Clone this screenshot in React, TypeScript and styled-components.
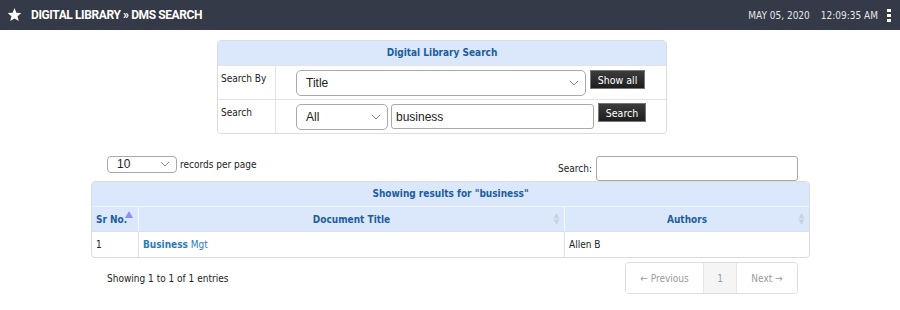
import React from "react";
import styled, { createGlobalStyle } from "styled-components";

const GlobalStyle = createGlobalStyle`
  body {
    margin: 0;
    background: #ffffff;
    font-family: "DejaVu Sans Condensed", "Liberation Sans", sans-serif;
    font-size: 10px;
    color: #222;
  }
`;

const TopBar = styled.div`
  height: 30px;
  background: #343a47;
  display: flex;
  align-items: center;
  padding: 0 7px;
  color: #fff;
`;

const Crumb = styled.div`
  margin-left: 9px;
  font-family: "Roboto", "Liberation Sans", sans-serif;
  font-weight: 700;
  font-size: 12px;
  letter-spacing: -0.4px;
  flex: 1;
`;

const Clock = styled.div`
  font-size: 10px;
  color: #e4e6ea;
  span {
    margin-left: 11px;
  }
`;

const Kebab = styled.div`
  display: flex;
  flex-direction: column;
  gap: 2px;
  margin-left: 9px;
  margin-right: 2px;
  i {
    width: 4px;
    height: 3px;
    background: #fff;
  }
`;

const Page = styled.div`
  padding: 10px 90px 0 91px;
`;

const Panel = styled.div`
  width: 448px;
  margin-left: 126px;
  border: 1px solid #d9dde3;
  border-radius: 4px;
  overflow: hidden;
`;

const BlueHead = styled.div`
  background: #dbe8fb;
  height: 24px;
  line-height: 24px;
  text-align: center;
  color: #1d5d9f;
  font-weight: 700;
`;

const FormRow = styled.div`
  display: grid;
  grid-template-columns: 58px 1fr;
  border-top: 1px solid #e3e3e3;
  height: 33px;
`;

const Label = styled.div`
  border-right: 1px solid #e3e3e3;
  padding: 7px 0 0 3px;
`;

const Controls = styled.div`
  display: flex;
  align-items: flex-start;
  padding: 4px 0 0 20px;
  gap: 3px;
`;

const SelectBox = styled.div<{ $w: number; $h: number; $r: number }>`
  width: ${(p) => p.$w}px;
  height: ${(p) => p.$h}px;
  box-sizing: border-box;
  border: 1px solid #a9a9a9;
  border-radius: ${(p) => p.$r}px;
  display: flex;
  align-items: center;
  justify-content: space-between;
  padding: 0 6px 0 9px;
  font-family: "Liberation Sans", sans-serif;
  font-size: 12px;
  color: #222;
  background: #fff;
`;

const Chevron = () => (
  <svg width="10" height="6" viewBox="0 0 10 6">
    <path d="M1 1l4 4 4-4" fill="none" stroke="#888" strokeWidth="1" />
  </svg>
);

const TextBox = styled.div<{ $w: number }>`
  width: ${(p) => p.$w}px;
  height: 25px;
  box-sizing: border-box;
  border: 1px solid #a9a9a9;
  border-radius: 3px;
  display: flex;
  align-items: center;
  padding-left: 4px;
  font-family: "Liberation Sans", sans-serif;
  font-size: 12px;
  background: #fff;
`;

const DarkButton = styled.div<{ $w: number; $top: number }>`
  width: ${(p) => p.$w}px;
  height: 19px;
  margin-top: ${(p) => p.$top}px;
  margin-left: 1px;
  box-sizing: border-box;
  background: linear-gradient(#3c3c3c, #1e1e1e);
  border: 1px solid #777;
  color: #fff;
  font-size: 10.5px;
  display: flex;
  align-items: center;
  justify-content: center;
`;

const ListBar = styled.div`
  display: flex;
  align-items: center;
  justify-content: space-between;
  margin-top: 21px;
  padding: 0 12px 0 16px;
  height: 26px;
`;

const Records = styled.div`
  display: flex;
  align-items: center;
  gap: 3px;
  margin-top: -8px;
`;

const FilterBox = styled.div`
  display: flex;
  align-items: center;
  gap: 4px;
`;

const Grid = styled.div`
  border: 1px solid #d9dde3;
  border-radius: 4px;
  overflow: hidden;
`;

const HeadRow = styled.div`
  display: grid;
  grid-template-columns: 46px 426px 1fr;
  background: #dbe8fb;
  border-top: 1px solid #f0f5fd;
  height: 24px;
`;

const HeadCell = styled.div<{ $center?: boolean }>`
  position: relative;
  display: flex;
  align-items: center;
  justify-content: ${(p) => (p.$center ? "center" : "flex-start")};
  padding-left: ${(p) => (p.$center ? 0 : 4)}px;
  color: #1d5d9f;
  font-weight: 700;
  & + & {
    border-left: 1px solid #f3f7fe;
  }
`;

const SortIcon = styled.svg`
  position: absolute;
  right: 4px;
  top: 5px;
`;

const BodyRow = styled.div`
  display: grid;
  grid-template-columns: 46px 426px 1fr;
  border-top: 1px solid #dde2e8;
  height: 25px;
`;

const Cell = styled.div`
  display: flex;
  align-items: center;
  padding-left: 4px;
  & + & {
    border-left: 1px solid #dde2e8;
  }
`;

const DocLink = styled.a`
  color: #2b7bb9;
  text-decoration: none;
  b {
    font-weight: 700;
  }
`;

const Footer = styled.div`
  display: flex;
  justify-content: space-between;
  align-items: center;
  margin-top: 4px;
  padding: 0 12px 0 16px;
`;

const Pager = styled.div`
  display: flex;
  border: 1px solid #dedede;
  border-radius: 4px;
  overflow: hidden;
  height: 30px;
`;

const PageItem = styled.div<{ $active?: boolean; $w: number }>`
  width: ${(p) => p.$w}px;
  display: flex;
  align-items: center;
  justify-content: center;
  color: #9a9a9a;
  background: ${(p) => (p.$active ? "#f5f5f5" : "#fff")};
  & + & {
    border-left: 1px solid #e6e6e6;
  }
`;

const Star = () => (
  <svg width="15" height="14" viewBox="0 0 24 23">
    <path
      d="M12 0l3.1 7.6 8.2.6-6.3 5.3 2 8L12 17.2 5 21.5l2-8L.7 8.2l8.2-.6z"
      fill="#fff"
    />
  </svg>
);

const Both = () => (
  <SortIcon width="7" height="14" viewBox="0 0 7 14">
    <path d="M3.5 1L6.5 6.5H.5z" fill="#c9d3df" />
    <path d="M3.5 13L.5 7.5h6z" fill="#c9d3df" />
  </SortIcon>
);

export default function App() {
  return (
    <>
      <GlobalStyle />
      <TopBar>
        <Star />
        <Crumb>DIGITAL LIBRARY » DMS SEARCH</Crumb>
        <Clock>
          MAY 05, 2020<span>12:09:35 AM</span>
        </Clock>
        <Kebab>
          <i />
          <i />
          <i />
        </Kebab>
      </TopBar>
      <Page>
        <Panel>
          <BlueHead>Digital Library Search</BlueHead>
          <FormRow>
            <Label>Search By</Label>
            <Controls>
              <SelectBox $w={290} $h={26} $r={5}>
                Title
                <Chevron />
              </SelectBox>
              <DarkButton $w={55} $top={0}>
                Show all
              </DarkButton>
            </Controls>
          </FormRow>
          <FormRow>
            <Label>Search</Label>
            <Controls>
              <SelectBox $w={92} $h={26} $r={5}>
                All
                <Chevron />
              </SelectBox>
              <TextBox $w={203}>business</TextBox>
              <DarkButton $w={48} $top={-1}>
                Search
              </DarkButton>
            </Controls>
          </FormRow>
        </Panel>
        <ListBar>
          <Records>
            <SelectBox $w={70} $h={17} $r={4}>
              10
              <Chevron />
            </SelectBox>
            records per page
          </Records>
          <FilterBox>
            Search:
            <TextBox $w={202} />
          </FilterBox>
        </ListBar>
        <Grid>
          <BlueHead>Showing results for "business"</BlueHead>
          <HeadRow>
            <HeadCell>
              Sr No.
              <SortIcon width="8" height="7" viewBox="0 0 8 7" style={{ top: 4, right: 5 }}>
                <path d="M4 0l4 7H0z" fill="#8f8ff2" />
              </SortIcon>
            </HeadCell>
            <HeadCell $center>
              Document Title
              <Both />
            </HeadCell>
            <HeadCell $center>
              Authors
              <Both />
            </HeadCell>
          </HeadRow>
          <BodyRow>
            <Cell>1</Cell>
            <Cell>
              <DocLink href="#">
                <b>Business</b> Mgt
              </DocLink>
            </Cell>
            <Cell>Allen B</Cell>
          </BodyRow>
        </Grid>
        <Footer>
          <span>Showing 1 to 1 of 1 entries</span>
          <Pager>
            <PageItem $w={77}>← Previous</PageItem>
            <PageItem $w={32} $active>
              1
            </PageItem>
            <PageItem $w={60}>Next →</PageItem>
          </Pager>
        </Footer>
      </Page>
    </>
  );
}
